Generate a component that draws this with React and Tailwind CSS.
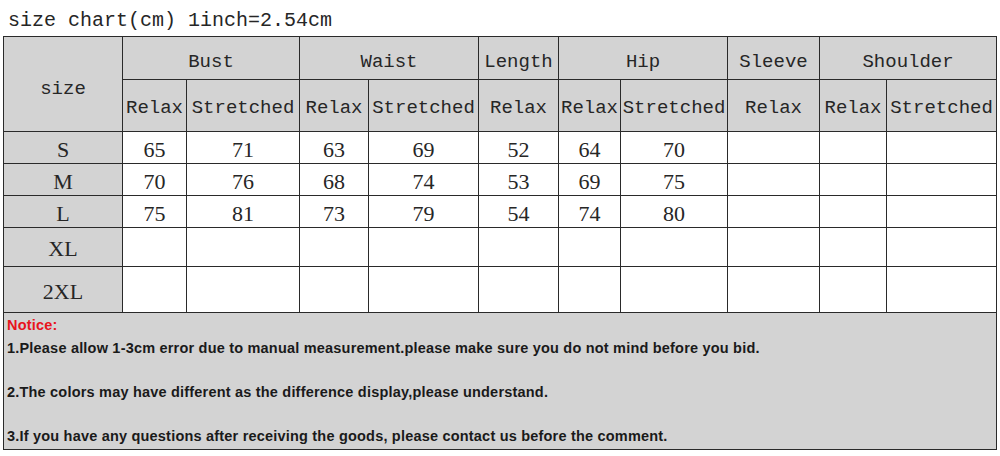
import React from 'react';

const mono = { fontFamily: '"Liberation Mono", "Noto Sans CJK SC", monospace' };

const colWidths = [119, 64, 113, 69, 110, 80, 62, 107, 92, 67, 110];

const rows = [
  { size: 'S', vals: ['65', '71', '63', '69', '52', '64', '70'], h: 'h-[32px]' },
  { size: 'M', vals: ['70', '76', '68', '74', '53', '69', '75'], h: 'h-[32px]' },
  { size: 'L', vals: ['75', '81', '73', '79', '54', '74', '80'], h: 'h-[32px]' },
  { size: 'XL', vals: [], h: 'h-[39px]' },
  { size: '2XL', vals: [], h: 'h-[46px]' },
];

const subHeads = ['Relax', 'Stretched', 'Relax', 'Stretched', 'Relax', 'Relax', 'Stretched', 'Relax', 'Relax', 'Stretched'];

const App = () => {
  const cell = 'border border-[#2a2a2a] p-0 text-center';

  return (
    <div className="w-[1000px] h-[456px] bg-white overflow-hidden text-[#262626]">
      <div className="h-[36px] pl-[8px] pt-[9px] text-[20px] leading-[24px]" style={mono}>
        size chart(cm) 1inch=2.54cm
      </div>

      <div className="pl-[3px]">
        <table className="table-fixed border-collapse w-[993px]">
          <colgroup>
            {colWidths.map((w, i) => (
              <col key={i} style={{ width: w }} />
            ))}
          </colgroup>
          <thead className="bg-[#d3d3d3] text-[19px]" style={mono}>
            <tr className="h-[43px]">
              <th rowSpan={2} className={`${cell} font-normal pt-[10px]`}>size</th>
              <th colSpan={2} className={`${cell} font-normal pt-[8px]`}>Bust</th>
              <th colSpan={2} className={`${cell} font-normal pt-[8px]`}>Waist</th>
              <th className={`${cell} font-normal pt-[8px]`}>Length</th>
              <th colSpan={2} className={`${cell} font-normal pt-[8px]`}>Hip</th>
              <th className={`${cell} font-normal pt-[8px]`}>Sleeve</th>
              <th colSpan={2} className={`${cell} font-normal pt-[8px]`}>Shoulder</th>
            </tr>
            <tr className="h-[52px]">
              {subHeads.map((s, i) => (
                <th key={i} className={`${cell} font-normal whitespace-nowrap pt-[6px]`}>{s}</th>
              ))}
            </tr>
          </thead>
          <tbody className="text-[22px] leading-none" style={{ fontFamily: '"Liberation Serif", serif' }}>
            {rows.map((r) => (
              <tr key={r.size} className={r.h}>
                <td className={`${cell} bg-[#d3d3d3] pt-[4px]`}>{r.size}</td>
                {Array.from({ length: 10 }).map((_, i) => (
                  <td key={i} className={`${cell} bg-white pt-[4px]`}>{r.vals[i] || ''}</td>
                ))}
              </tr>
            ))}
            <tr className="h-[137px]">
              <td colSpan={11} className="border border-[#2a2a2a] bg-[#d3d3d3] p-0 align-top text-left">
                <div
                  className="pl-[3px] pt-[4px] text-[14.5px] tracking-[0.2px] font-bold text-[#1a1a1a] leading-[17px]"
                  style={{ fontFamily: '"Liberation Sans", Arial, sans-serif' }}
                >
                  <div className="text-[#e8141c]">Notice:</div>
                  <div className="mt-[6px]">1.Please allow 1-3cm error due to manual measurement.please make sure you do not mind before you bid.</div>
                  <div className="mt-[27px]">2.The colors may have different as the difference display,please understand.</div>
                  <div className="mt-[27px]">3.If you have any questions after receiving the goods, please contact us before the comment.</div>
                </div>
              </td>
            </tr>
          </tbody>
        </table>
      </div>
    </div>
  );
};

export default App;
